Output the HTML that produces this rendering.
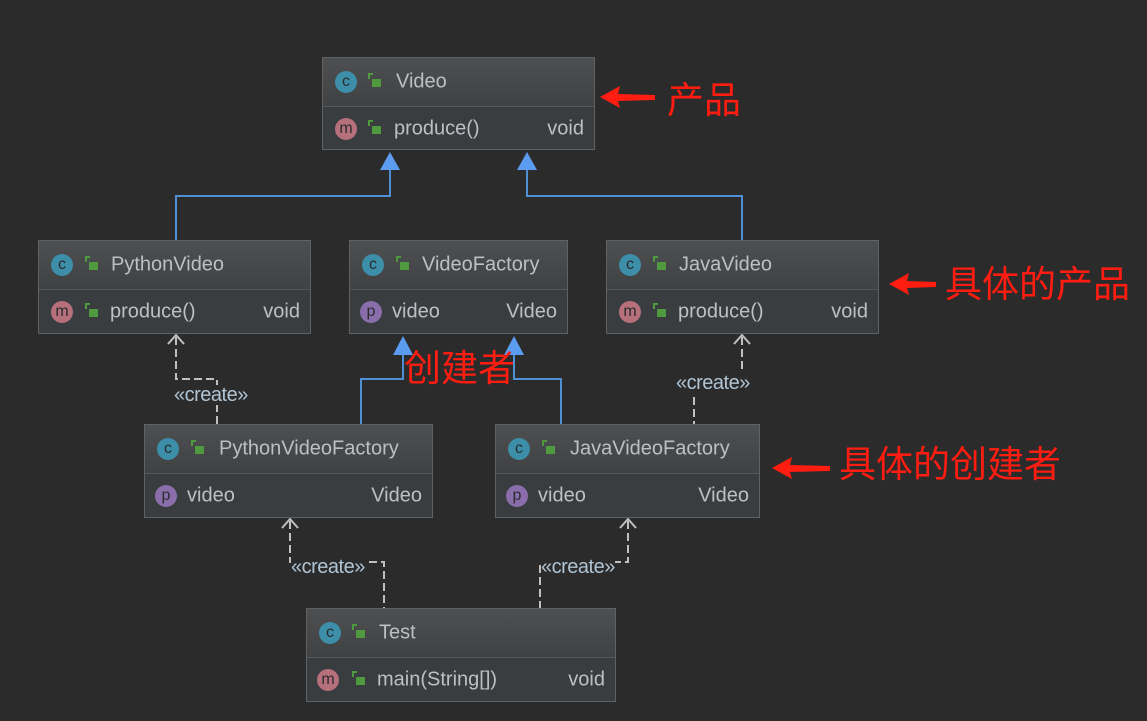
<!DOCTYPE html>
<html><head><meta charset="utf-8"><style>
body{margin:0;width:1147px;height:721px;background:#2b2b2b;position:relative;overflow:hidden;font-family:"Liberation Sans","DejaVu Sans",sans-serif}
.b{position:absolute;border:1px solid #5f6163;background:#3a3d40;box-sizing:border-box}
.h{height:48px;border-bottom:1px solid #55585a;background:linear-gradient(#4d4f51,#3f4143);position:relative}
.r{height:44px;position:relative}
.t{position:absolute;top:50%;transform:translateY(-50%);color:#bcc0c4;font-size:20px;white-space:nowrap}
.ic{position:absolute;top:50%;width:22px;height:22px;margin-top:-11px;border-radius:50%;font-size:16px;line-height:21px;text-align:center;color:#2a2c2e;font-family:"Liberation Sans",sans-serif}
.c{background:#3d8ea8}.m{background:#b5707b}.p{background:#8a6dab}
.lk{position:absolute;top:50%;margin-top:-3px;width:9px;height:8px;background:#4f9a3e}
.lk:before{content:"";position:absolute;left:-4px;top:-6px;width:5px;height:6px;border:2px solid #4f9a3e;border-right:none;border-bottom:none;box-sizing:border-box}
.red{position:absolute;color:#ff1c10;font-size:37px;font-family:"Liberation Sans","Noto Sans CJK SC",sans-serif;line-height:1}
.cr{position:absolute;color:#b0c4d4;font-size:20px;background:#2b2b2b;line-height:1;letter-spacing:-0.5px}
</style></head><body>
<svg width="1147" height="721" style="position:absolute;left:0;top:0">
<g stroke="#4f8fd6" stroke-width="2" fill="none">
<path d="M390 165V196H176V240M527 165V196H742V240M403 350V379H361V424M514 350V379H561V424"/>
</g>
<g fill="#5b9cf0">
<path d="M390 152L380 170H400Z"/><path d="M527 152L517 170H537Z"/>
<path d="M403 336L393 355H413Z"/><path d="M514 336L504 355H524Z"/>
</g>
<g stroke="#c0c0c0" stroke-width="2" fill="none" stroke-dasharray="8,4">
<path d="M176 337V379H217V424M742 337V378H694V424M290 521V562H384V608M628 521V562H540V608"/>
</g>
<g stroke="#c0c0c0" stroke-width="2" fill="none">
<path d="M168 344L176 335L184 344M734 344L742 335L750 344M282 528L290 519L298 528M620 528L628 519L636 528"/>
</g>
<g fill="#ff1c10">
<path d="M600 97L620 86L618 94L655 95L655 100L618 101L620 108Z"/>
<path d="M889 284L909 273L907 281L936 282L936 287L907 288L909 295Z"/>
<path d="M772 468L792 457L790 465L830 466L830 471L790 472L792 479Z"/>
</g>
</svg>
<div class="cr" style="left:174px;top:385px">«create»</div>
<div class="cr" style="left:676px;top:373px">«create»</div>
<div class="cr" style="left:291px;top:557px">«create»</div>
<div class="cr" style="left:541px;top:557px">«create»</div>

<div class="b" style="left:322px;top:57px;width:273px;height:93px">
<div class="h"><span class="ic c" style="left:12px">c</span><span class="lk" style="left:49px"></span><span class="t" style="left:73px">Video</span></div>
<div class="r"><span class="ic m" style="left:12px">m</span><span class="lk" style="left:49px"></span><span class="t" style="left:71px">produce()</span><span class="t" style="right:10px">void</span></div>
</div>
<div class="b" style="left:38px;top:240px;width:273px;height:94px">
<div class="h"><span class="ic c" style="left:12px">c</span><span class="lk" style="left:50px"></span><span class="t" style="left:72px">PythonVideo</span></div>
<div class="r"><span class="ic m" style="left:12px">m</span><span class="lk" style="left:50px"></span><span class="t" style="left:71px">produce()</span><span class="t" style="right:10px">void</span></div>
</div>
<div class="b" style="left:349px;top:240px;width:219px;height:94px">
<div class="h"><span class="ic c" style="left:12px">c</span><span class="lk" style="left:50px"></span><span class="t" style="left:72px">VideoFactory</span></div>
<div class="r"><span class="ic p" style="left:10px">p</span><span class="t" style="left:42px">video</span><span class="t" style="right:10px">Video</span></div>
</div>
<div class="b" style="left:606px;top:240px;width:273px;height:94px">
<div class="h"><span class="ic c" style="left:12px">c</span><span class="lk" style="left:50px"></span><span class="t" style="left:72px">JavaVideo</span></div>
<div class="r"><span class="ic m" style="left:12px">m</span><span class="lk" style="left:50px"></span><span class="t" style="left:71px">produce()</span><span class="t" style="right:10px">void</span></div>
</div>
<div class="b" style="left:144px;top:424px;width:289px;height:94px">
<div class="h"><span class="ic c" style="left:12px">c</span><span class="lk" style="left:50px"></span><span class="t" style="left:74px">PythonVideoFactory</span></div>
<div class="r"><span class="ic p" style="left:10px">p</span><span class="t" style="left:42px">video</span><span class="t" style="right:10px">Video</span></div>
</div>
<div class="b" style="left:495px;top:424px;width:265px;height:94px">
<div class="h"><span class="ic c" style="left:12px">c</span><span class="lk" style="left:50px"></span><span class="t" style="left:74px">JavaVideoFactory</span></div>
<div class="r"><span class="ic p" style="left:10px">p</span><span class="t" style="left:42px">video</span><span class="t" style="right:10px">Video</span></div>
</div>
<div class="b" style="left:306px;top:608px;width:310px;height:94px">
<div class="h"><span class="ic c" style="left:12px">c</span><span class="lk" style="left:49px"></span><span class="t" style="left:72px">Test</span></div>
<div class="r"><span class="ic m" style="left:10px">m</span><span class="lk" style="left:49px"></span><span class="t" style="left:70px">main(String[])</span><span class="t" style="right:10px">void</span></div>
</div>

<div class="red" style="left:667px;top:82px">产品</div>
<div class="red" style="left:945px;top:266px">具体的产品</div>
<div class="red" style="left:404px;top:350px">创建者</div>
<div class="red" style="left:839px;top:446px">具体的创建者</div>
</body></html>
